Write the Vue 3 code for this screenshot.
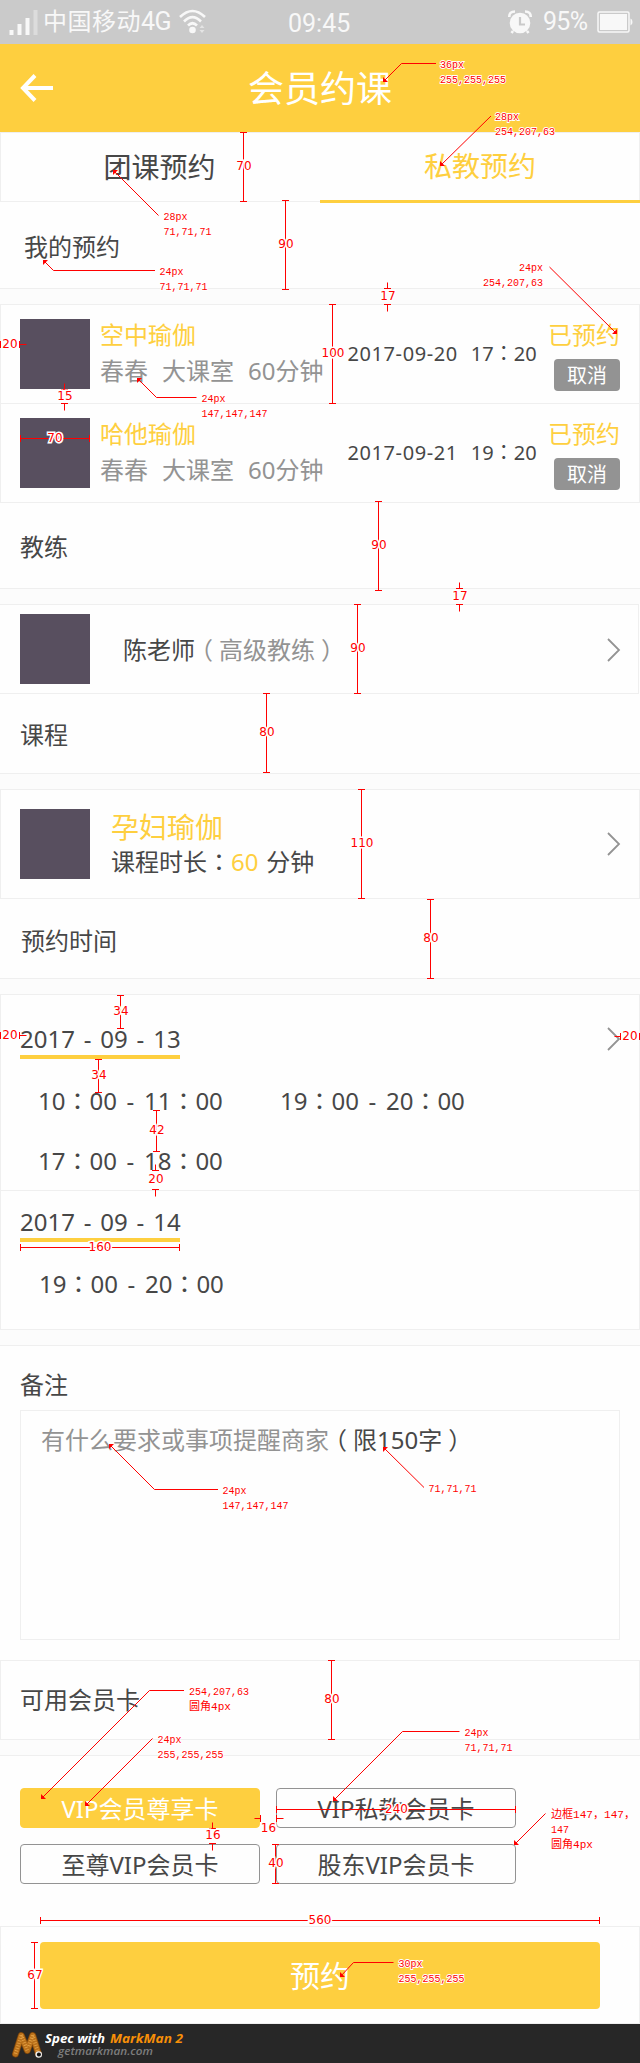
<script setup>
const bookings = [
  { name: '空中瑜伽', date: '2017-09-20', h: '17', m: '20' },
  { name: '哈他瑜伽', date: '2017-09-21', h: '19', m: '20' },
]
const days = [
  { date: '2017 - 09 - 13', slots: [['10', '00', '11', '00'], ['19', '00', '20', '00'], ['17', '00', '18', '00']] },
  { date: '2017 - 09 - 14', slots: [['19', '00', '20', '00']] },
]
const cards = ['VIP会员尊享卡', 'VIP私教会员卡', '至尊VIP会员卡', '股东VIP会员卡']

// Dimension marks. o: the ticks point outwards, with the label between them.
const vertical = [
  { x: 243.5, a: 132.5, b: 201.5, t: '70', c: 166 },
  { x: 285.5, a: 200.5, b: 289.5, t: '90', c: 244 },
  { x: 387.5, a: 288.5, b: 304.5, t: '17', c: 296, o: 1 },
  { x: 332.5, a: 304.5, b: 403.5, t: '100', c: 353 },
  { x: 64.5, a: 389.5, b: 403.5, t: '15', c: 396, o: 1 },
  { x: 378.5, a: 501.5, b: 590.5, t: '90', c: 545 },
  { x: 459.5, a: 588.5, b: 604.5, t: '17', c: 596, o: 1 },
  { x: 357.5, a: 604.5, b: 693.5, t: '90', c: 648 },
  { x: 266.5, a: 693.5, b: 772.5, t: '80', c: 732 },
  { x: 361.5, a: 789.5, b: 898.5, t: '110', c: 843 },
  { x: 430.5, a: 899.5, b: 978.5, t: '80', c: 938 },
  { x: 120.5, a: 995.5, b: 1028.5, t: '34', c: 1011 },
  { x: 98.5, a: 1059.5, b: 1092.5, t: '34', c: 1075 },
  { x: 156.5, a: 1110.5, b: 1151.5, t: '42', c: 1130 },
  { x: 155.5, a: 1170.5, b: 1189.5, t: '20', c: 1179, o: 1 },
  { x: 331.5, a: 1660.5, b: 1739.5, t: '80', c: 1699 },
  { x: 212.5, a: 1828.5, b: 1843.5, t: '16', c: 1835, o: 1 },
  { x: 275.5, a: 1844.5, b: 1883.5, t: '40', c: 1863 },
  { x: 34.5, a: 1942.5, b: 2008.5, t: '67', c: 1975 },
]
const horizontal = [
  { y: 344.5, a: 0.5, b: 19.5, t: '20', c: 10, o: 1 },
  { y: 438.5, a: 20.5, b: 89.5, t: '70', c: 55 },
  { y: 1035.5, a: 0.5, b: 19.5, t: '20', c: 10, o: 1 },
  { y: 1036.5, a: 620.5, b: 639.5, t: '20', c: 630, o: 1 },
  { y: 1247.5, a: 20.5, b: 179.5, t: '160', c: 100 },
  { y: 1809.5, a: 276.5, b: 515.5, t: '240', c: 396.5 },
  { y: 1818.5, a: 260.5, b: 276.5, t: '16', c: 268.5, o: 1, dy: 10 },
  { y: 1920.5, a: 40.5, b: 599.5, t: '560', c: 320 },
]
const notes = [
  { p: [[383, 82], [401.5, 63.5], [436, 63.5]], x: 440, y: 68, t: ['36px', '255,255,255'] },
  { p: [[440, 166], [491, 116]], x: 495, y: 120, t: ['28px', '254,207,63'] },
  { p: [[113, 170], [158.5, 215.5]], x: 163.5, y: 220, t: ['28px', '71,71,71'] },
  { p: [[43, 260], [53.5, 270.5], [155, 270.5]], x: 159.5, y: 275, t: ['24px', '71,71,71'] },
  { p: [[617, 334], [549.5, 267]], x: 543, y: 271, t: ['24px', '254,207,63'], end: 1 },
  { p: [[137, 378], [156.5, 397.5], [196.5, 397.5]], x: 201.5, y: 402, t: ['24px', '147,147,147'] },
  { p: [[109, 1444], [154.5, 1489.5], [218, 1489.5]], x: 222.5, y: 1494, t: ['24px', '147,147,147'] },
  { p: [[383, 1447], [424, 1487.5]], x: 428.5, y: 1492, t: ['71,71,71'] },
  { p: [[41, 1799], [149.5, 1690.5], [184, 1690.5]], x: 189, y: 1695, t: ['254,207,63', '圆角4px'] },
  { p: [[85, 1806], [152.5, 1738.5]], x: 157.5, y: 1743, t: ['24px', '255,255,255'] },
  { p: [[333, 1801], [402.5, 1731.5], [459.5, 1731.5]], x: 464.5, y: 1736, t: ['24px', '71,71,71'] },
  { p: [[514, 1845], [545.5, 1813.5]], x: 551, y: 1818, t: ['边框147，147，', '147', '圆角4px'] },
  { p: [[340, 1977], [353.5, 1962.5], [393.5, 1962.5]], x: 398.5, y: 1967, t: ['30px', '255,255,255'] },
]
const width = (s) => [...s].reduce((n, c) => n + (c.charCodeAt(0) > 255 ? 12 : 6), 0)
function head([[x, y], [nx, ny]]) {
  const sx = Math.sign(nx - x) * 5
  const sy = Math.sign(ny - y) * 5
  return `${x},${y} ${x + sx},${y} ${x},${y + sy}`
}
function spanPath(m, isVertical) {
  const a = m.a, b = m.b
  const ax = m.o ? a - 6 : a, bx = m.o ? b + 7 : b
  if (isVertical) {
    const body = m.o ? `M${m.x} ${ax}V${a}M${m.x} ${b}V${bx}` : `M${m.x} ${a}V${b}`
    return `M${m.x - 3.5} ${a}h7M${m.x - 3.5} ${b}h7${body}`
  }
  const body = m.o ? `M${ax} ${m.y}H${a}M${b} ${m.y}H${bx}` : `M${a} ${m.y}H${b}`
  return `M${a} ${m.y - 3.5}v7M${b} ${m.y - 3.5}v7${body}`
}
</script>

<template>
  <div class="page">
    <div class="status">
      <svg class="signal" width="28" height="26" viewBox="0 0 28 26">
        <path d="M0.500 21h4v5h-4zM8.500 15h4v11h-4zM16.500 9h4v17h-4z" fill="#f8f8f8" />
        <path d="M24.500 1h4v25h-4z" fill="#dcdcdc" />
      </svg>
      <span class="carrier">中国移动<i>4G</i></span>
      <svg class="wifi" width="28" height="26" viewBox="0 0 28 26">
        <g fill="none" stroke="#f8f8f8" stroke-width="2.6">
          <path d="M1 8Q13.500 -4 26 8" />
          <path d="M5 12.500Q13.500 4 22 12.500" />
          <path d="M9 16.500Q13.500 12 18 16.500" />
        </g>
        <circle cx="13.500" cy="21" r="3.300" fill="#f8f8f8" />
        <path d="M20.500 19l2.500-3 2.500 3zM20.500 21l2.500 3 2.500-3z" fill="#e4e4e4" />
      </svg>
      <span class="clock">09:45</span>
      <svg class="alarm" width="26" height="26" viewBox="0 0 26 26">
        <circle cx="13" cy="14" r="10.300" fill="#f8f8f8" />
        <path d="M2.300 8Q2 2.500 8 2.500M23.700 8Q24 2.500 18 2.500M6 22l-1.500 2M20 22l1.500 2" fill="none" stroke="#f8f8f8" stroke-width="2.600" />
        <path d="M13 8v7.500h5" fill="none" stroke="#cacaca" stroke-width="2.200" />
      </svg>
      <span class="percent">95%</span>
      <svg class="battery" width="36" height="22" viewBox="0 0 36 22">
        <rect x="1" y="1" width="31" height="20" rx="1.500" fill="none" stroke="#f8f8f8" stroke-width="1.500" />
        <rect x="3" y="3" width="27" height="16" fill="#f8f8f8" />
        <path d="M33.500 7.500q2 .5 2 3.500t-2 3.500z" fill="#f8f8f8" />
      </svg>
    </div>

    <header class="nav">
      <svg class="back" width="34" height="28" viewBox="0 0 34 28">
        <path d="M15 1.500L3 14L15 26.500M3 14H33" fill="none" stroke="#fff" stroke-width="4" />
      </svg>
      <h1>会员约课</h1>
    </header>

    <nav class="tabs">
      <span>团课预约</span>
      <span class="active">私教预约</span>
    </nav>

    <h2 class="heading mine">我的预约</h2>
    <div class="gap"></div>
    <section class="list">
      <div v-for="b in bookings" :key="b.name" class="booking">
        <div class="thumb"></div>
        <div class="who">
          <p class="yellow">{{ b.name }}</p>
          <p class="sub"><span>春春</span><span>大课室</span><span>60分钟</span></p>
        </div>
        <div class="when"><span class="ymd">{{ b.date }}</span><span>{{ b.h }}<i class="mid">：</i>{{ b.m }}</span></div>
        <div class="state">
          <p class="yellow">已预约</p>
          <button>取消</button>
        </div>
      </div>
    </section>

    <h2 class="heading coach-title">教练</h2>
    <div class="gap"></div>
    <section class="coach">
      <div class="thumb"></div>
      <p>陈老师<span class="gray"><i class="open">（</i>高级教练<i class="close">）</i></span></p>
      <svg class="chevron" width="14" height="24" viewBox="0 0 14 24"><path d="M1 1L12 12L1 23" /></svg>
    </section>

    <h2 class="heading">课程</h2>
    <div class="gap"></div>
    <section class="course">
      <div class="thumb"></div>
      <div class="info">
        <p class="yellow big">孕妇瑜伽</p>
        <p class="length">课程时长<i class="mid">：</i><span class="yellow">60</span> 分钟</p>
      </div>
      <svg class="chevron" width="14" height="24" viewBox="0 0 14 24"><path d="M1 1L12 12L1 23" /></svg>
    </section>

    <h2 class="heading time-title">预约时间</h2>
    <div class="gap"></div>
    <section class="times">
      <div v-for="(d, i) in days" :key="d.date" class="day">
        <div class="day-head">
          <span class="date">{{ d.date }}</span>
          <svg v-if="i === 0" class="chevron" width="14" height="24" viewBox="0 0 14 24"><path d="M1 1L12 12L1 23" /></svg>
        </div>
        <div class="slots">
          <span v-for="s in d.slots" :key="s.join()">{{ s[0] }}<i class="mid">：</i>{{ s[1] }} - {{ s[2] }}<i class="mid">：</i>{{ s[3] }}</span>
        </div>
      </div>
    </section>
    <div class="gap"></div>

    <section class="remark">
      <h2>备注</h2>
      <div class="textarea"><span class="gray">有什么要求或事项提醒商家</span><i class="open">（</i>限150字<i class="close">）</i></div>
    </section>

    <h2 class="heading boxed">可用会员卡</h2>
    <div class="gap"></div>
    <section class="cards">
      <div v-for="(c, i) in cards" :key="c" class="card" :class="{ chosen: i === 0 }">{{ c }}</div>
    </section>

    <div class="bar"><button class="submit">预约</button></div>

    <footer class="foot">
      <svg width="34" height="32" viewBox="0 0 34 32">
        <g fill="none" stroke-linejoin="round">
          <path d="M4.500 26L10.300 7.500L16.300 22.500L21.700 7.500L27.500 26" stroke="#7a430a" stroke-width="7" stroke-linecap="round" />
          <path d="M4.500 26L10.300 7.500L16.300 22.500L21.700 7.500L27.500 26" stroke="#b9701a" stroke-width="5.500" stroke-linecap="round" />
          <path d="M10.300 7L16.300 22.500M21.700 7L27.500 26M10.300 7.500L4.500 26M21.700 7.500L17.500 19" stroke="#e3a045" stroke-width="3.500" stroke-dasharray="0.900 1.700" />
        </g>
        <circle cx="27.700" cy="26.500" r="3.300" fill="#eee" />
        <circle cx="27.900" cy="26.500" r="2" fill="#111" />
      </svg>
      <svg class="brand" width="150" height="39" viewBox="0 0 150 39">
        <text x="0" y="18.500" fill="#fff" font-weight="700" font-size="13" textLength="60" lengthAdjust="spacingAndGlyphs">Spec with</text>
        <text x="65" y="18.500" fill="#f78f08" font-weight="700" font-size="13" textLength="73" lengthAdjust="spacingAndGlyphs">MarkMan 2</text>
        <text x="13" y="30.500" fill="#7d7d7d" font-weight="600" font-size="11.500" textLength="95" lengthAdjust="spacingAndGlyphs">getmarkman.com</text>
      </svg>
    </footer>

    <svg class="marks" width="640" height="2063" viewBox="0 0 640 2063">
      <g class="spans">
        <path v-for="(m, i) in vertical" :key="'v' + i" :d="spanPath(m, true)" />
        <path v-for="(m, i) in horizontal" :key="'h' + i" :d="spanPath(m, false)" />
      </g>
      <g class="nums">
        <text v-for="(m, i) in vertical" :key="'vt' + i" :x="m.x + 0.5" :y="m.c + 4.300">{{ m.t }}</text>
        <text v-for="(m, i) in horizontal" :key="'ht' + i" :x="m.c" :y="m.y + 3.800 + (m.dy || 0)">{{ m.t }}</text>
      </g>
      <g v-for="(n, i) in notes" :key="'n' + i">
        <polyline class="leader" :points="n.p.map((q) => q.join()).join(' ')" />
        <polygon class="head" :points="head(n.p)" />
        <text v-for="(t, k) in n.t" :key="k" class="label" :x="n.end ? n.x - width(t) : n.x" :y="n.y + k * 15" :textLength="width(t)" lengthAdjust="spacingAndGlyphs">{{ t }}</text>
      </g>
    </svg>
  </div>
</template>

<style>
body { background: #fefefe; }
</style>

<style scoped>
* { box-sizing: border-box; }
.page { position: relative; width: 640px; height: 2063px; background: #fefefe; color: #474747; font-family: "Noto Sans", "Noto Sans CJK SC", sans-serif; font-size: 24px; line-height: 36px; white-space: nowrap; overflow: hidden; }
h1, h2, p { margin: 0; font-weight: 400; font-size: inherit; }
i { font-style: normal; }
button { border: 0; padding: 0; font-family: inherit; color: #fff; }
.yellow { color: #fecf3f; }
.gray { color: #939393; }
/* Full-width punctuation centred in its cell */
.mid { font-family: "Noto Sans CJK TC", sans-serif; line-height: 1; }
.open { margin: 0 6px 0 -6px; }
.close { margin: 0 -6px 0 6px; }

.status { height: 44px; background: #cacaca; display: flex; align-items: center; color: #f8f8f8; padding-left: 9px; font-family: Roboto, "Noto Sans CJK SC", sans-serif; font-size: 24px; }
.status > * { flex: none; }
.signal { overflow: visible; margin-top: -1px; }
.carrier { margin-left: 6px; width: 130px; line-height: 44px; letter-spacing: .5px; }
.carrier i { font-size: 25px; letter-spacing: -.5px; }
.wifi { margin-left: 6px; }
.clock { margin: 3px 0 0 81px; width: 65px; font-size: 25px; line-height: 40px; }
.alarm { margin-left: 154px; }
.percent { margin-left: 10px; width: 54px; font-size: 25px; letter-spacing: -.7px; }

.nav { height: 88px; background: #fecf3f; display: grid; grid-template-columns: 54px 1fr 54px; align-items: center; }
.back { margin-left: 20px; }
.nav h1 { color: #fff; font-size: 36px; line-height: 50px; text-align: center; padding-top: 1px; }

.tabs { height: 70px; border: 1px solid #efefef; display: grid; grid-template-columns: 317px 322px; font-size: 28px; text-align: center; line-height: 69px; }
.tabs .active { color: #fecf3f; height: 70px; margin-left: 2px; border-bottom: 3px solid #fecf3f; line-height: 67px; }
.heading { height: 80px; line-height: 82px; padding-left: 20px; border-bottom: 1px solid #efefef; }
.mine { height: 87px; line-height: 90px; padding-left: 24px; }
.coach-title { height: 86px; line-height: 88px; }
.time-title { line-height: 83px; padding-left: 21px; }
.gap { height: 15px; background: #fcfcfc; }
.thumb { width: 70px; height: 70px; background: #584f5f; flex: none; }

.list { border: 1px solid #efefef; height: 199px; }
.booking { height: 98px; display: flex; align-items: center; padding: 0 19px; }
.booking + .booking { border-top: 1px solid #efefef; height: 99px; }
.who { margin-left: 10px; width: 248px; align-self: flex-start; padding-top: 12px; }
.sub { color: #939393; display: flex; gap: 14px; }
.when { font-size: 20px; display: flex; gap: 13px; width: 201px; }
.ymd { letter-spacing: .6px; }
.state { width: 72px; align-self: flex-start; padding-top: 13px; }
.state p { line-height: 34px; }
.state button { display: block; width: 66px; height: 32px; margin: 7px 0 0 6px; border-radius: 4px; background: #939393; font-size: 20px; line-height: 31px; }

.coach { width: 639px; height: 90px; border: 1px solid #efefef; border-left: 0; display: flex; align-items: center; padding: 0 18px 0 20px; }
.coach p { margin: 1px 0 0 33px; }
.chevron { margin-left: auto; margin-right: -1px; fill: none; stroke: #939393; stroke-width: 1.8; flex: none; }
.coach .chevron { margin-top: 2px; }
.course { height: 110px; border: 1px solid #efefef; display: flex; align-items: center; padding: 0 19px; }
.info { margin: 1px 0 0 21px; }
.info .big { font-size: 28px; line-height: 34px; }
.length { word-spacing: 1.5px; }

.times { height: 336px; border: 1px solid #efefef; }
.day { height: 195px; padding: 23px 19px 0; word-spacing: 2.6px; }
.day + .day { height: 139px; border-top: 1px solid #efefef; padding-top: 10px; }
.day-head { display: flex; align-items: center; height: 41px; }
.date { width: 160px; height: 41px; line-height: 41px; border-bottom: 4px solid #fecf3f; }
.slots { display: grid; grid-template-columns: 242px 242px; margin: 12px 0 0 18px; line-height: 60px; word-spacing: 3.4px; }
.day + .day .slots { margin-left: 19px; }

.remark { height: 315px; border-top: 1px solid #efefef; padding: 21px 20px 0; }
.textarea { margin-top: 7px; height: 230px; border: 1px solid #efefef; padding: 11px 20px; }
.boxed { border: 1px solid #efefef; padding-left: 19px; line-height: 78px; }
.cards { height: 171px; border-top: 1px solid #efefef; padding: 32px 0 0 20px; display: grid; grid-template-columns: 240px 240px; grid-auto-rows: 40px; gap: 16px; }
.card { border: 1px solid #939393; border-radius: 4px; text-align: center; line-height: 39px; }
.chosen { background: #fecf3f; border-color: #fecf3f; color: #fff; }
.bar { height: 98px; border: 1px solid #efefef; padding: 15px 39px; }
.submit { display: block; width: 560px; height: 67px; border-radius: 4px; background: #fecf3f; font-size: 30px; line-height: 67px; }
.foot { height: 39px; background: #272727; display: flex; align-items: center; padding-left: 11px; }
.brand { font-family: "Open Sans", sans-serif; font-style: italic; }

/* Measurement layer drawn over the whole screen */
.marks { position: absolute; left: 0; top: 0; }
.spans { fill: none; stroke: #f00; stroke-width: 1; }
.nums text { font: 12px "DejaVu Sans", sans-serif; text-anchor: middle; fill: #f00; stroke: #fff; stroke-width: 3px; paint-order: stroke; }
.leader { fill: none; stroke: #f00; stroke-width: 1; }
.head { fill: #f00; }
.label { font: 11.5px "Liberation Mono", "Noto Sans CJK SC", monospace; fill: #f00; stroke: #fff; stroke-width: 2px; paint-order: stroke; }
</style>
